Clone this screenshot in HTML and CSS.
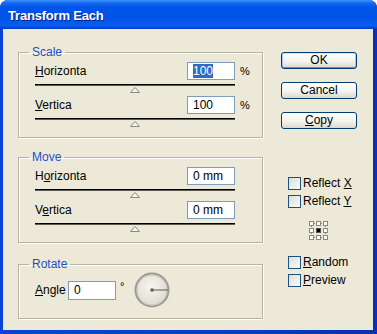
FILE: index.html
```html
<!doctype html>
<html>
    <head>
        <title>Transform Each</title>
        <link rel="stylesheet" href="styles.css">
    </head>
    <body>
        <div class="window">
            <div class="titlebar"><span class="title">Transform Each</span></div>
            <div class="body">
                <div class="groups">
                    <fieldset class="group">
                        <legend>Scale</legend>
                        <div class="fields">
                            <span class="lbl"><u>H</u>orizonta</span>
                            <span class="input"><span class="sel">100</span></span>
                            <span class="unit">%</span>
                            <div class="slider">
                                <div class="track"></div>
                                <svg class="thumb" width="10" height="6" viewBox="0 0 10 6"><polygon points="0.5,5.5 5,0.5 9.5,5.5" fill="#f7f6f1" stroke="#8d8b80" /></svg>
                            </div>
                            <span class="lbl"><u>V</u>ertica</span>
                            <span class="input">100</span>
                            <span class="unit">%</span>
                            <div class="slider">
                                <div class="track"></div>
                                <svg class="thumb" width="10" height="6" viewBox="0 0 10 6"><polygon points="0.5,5.5 5,0.5 9.5,5.5" fill="#f7f6f1" stroke="#8d8b80" /></svg>
                            </div>
                        </div>
                    </fieldset>

                    <fieldset class="group">
                        <legend>Move</legend>
                        <div class="fields">
                            <span class="lbl">H<u>o</u>rizonta</span>
                            <span class="input">0 mm</span>
                            <span class="unit"></span>
                            <div class="slider">
                                <div class="track"></div>
                                <svg class="thumb" width="10" height="6" viewBox="0 0 10 6"><polygon points="0.5,5.5 5,0.5 9.5,5.5" fill="#f7f6f1" stroke="#8d8b80" /></svg>
                            </div>
                            <span class="lbl">V<u>e</u>rtica</span>
                            <span class="input">0 mm</span>
                            <span class="unit"></span>
                            <div class="slider">
                                <div class="track"></div>
                                <svg class="thumb" width="10" height="6" viewBox="0 0 10 6"><polygon points="0.5,5.5 5,0.5 9.5,5.5" fill="#f7f6f1" stroke="#8d8b80" /></svg>
                            </div>
                        </div>
                    </fieldset>

                    <fieldset class="group rotate">
                        <legend>Rotate</legend>
                        <div class="angle-row">
                            <span class="angle-lbl"><u>A</u>ngle</span>
                            <span class="input angle-input">0</span>
                            <span class="deg">°</span>
                            <svg class="dial" width="36" height="36" viewBox="0 0 36 36">
                                <defs>
                                    <radialGradient id="dialfill" cx="0.45" cy="0.4" r="0.6">
                                        <stop offset="0" stop-color="#f6f5f0" />
                                        <stop offset="1" stop-color="#dedbcf" />
                                    </radialGradient>
                                </defs>
                                <circle cx="18" cy="18" r="16.5" fill="url(#dialfill)" stroke="#9c9a92" stroke-width="2" />
                                <circle cx="18" cy="18" r="15" fill="none" stroke="#c9c7bd" stroke-width="1" />
                                <line x1="18" y1="18" x2="34" y2="18" stroke="#5a5a55" stroke-width="1" />
                                <rect x="16.5" y="16.5" width="3" height="3" fill="#5a5a55" />
                            </svg>
                        </div>
                    </fieldset>
                </div>

                <div class="side">
                    <div class="buttons">
                        <button class="btn default">OK</button>
                        <button class="btn">Cancel</button>
                        <button class="btn"><u>C</u>opy</button>
                    </div>
                    <div class="checks reflect">
                        <div class="check"><span class="box"></span><span>Reflect <u>X</u></span></div>
                        <div class="check"><span class="box"></span><span>Reflect <u>Y</u></span></div>
                    </div>
                    <svg class="refpt" width="20" height="20" viewBox="0 0 20 20">
                        <g stroke="#8a887e" stroke-width="1" stroke-dasharray="1 1">
                            <line x1="5" y1="2.5" x2="7" y2="2.5" />
                            <line x1="12" y1="2.5" x2="14" y2="2.5" />
                            <line x1="5" y1="16.5" x2="7" y2="16.5" />
                            <line x1="12" y1="16.5" x2="14" y2="16.5" />
                            <line x1="2.5" y1="5" x2="2.5" y2="7" />
                            <line x1="2.5" y1="12" x2="2.5" y2="14" />
                            <line x1="16.5" y1="5" x2="16.5" y2="7" />
                            <line x1="16.5" y1="12" x2="16.5" y2="14" />
                        </g>
                        <g fill="#fff" stroke="#8a887e" stroke-width="1">
                            <rect x="0.5" y="0.5" width="4" height="4" />
                            <rect x="7.5" y="0.5" width="4" height="4" />
                            <rect x="14.5" y="0.5" width="4" height="4" />
                            <rect x="0.5" y="7.5" width="4" height="4" />
                            <rect x="14.5" y="7.5" width="4" height="4" />
                            <rect x="0.5" y="14.5" width="4" height="4" />
                            <rect x="7.5" y="14.5" width="4" height="4" />
                            <rect x="14.5" y="14.5" width="4" height="4" />
                        </g>
                        <rect x="7.5" y="7.5" width="4" height="4" fill="#000" stroke="#555" />
                    </svg>
                    <div class="checks options">
                        <div class="check"><span class="box"></span><span><u>R</u>andom</span></div>
                        <div class="check"><span class="box"></span><span><u>P</u>review</span></div>
                    </div>
                </div>
            </div>
        </div>
    </body>
</html>
```
FILE: styles.css
```css
* {
    box-sizing: border-box;
}

body {
    margin: 0;
    background: #fff;
    font-family: "Liberation Sans", Arial, sans-serif;
    font-size: 12px;
    color: #000;
}

.window {
    width: 377px;
    height: 334px;
    display: flex;
    flex-direction: column;
    background: linear-gradient(to right, #0842d8, #0a3ccc 50%, #0830b8);
    border-radius: 8px 8px 0 0;
    overflow: hidden;
}

.titlebar {
    height: 29px;
    flex: none;
    display: flex;
    align-items: center;
    padding: 1px 8px 0;
    background: linear-gradient(
        to bottom,
        #3d93fb 0,
        #1768f0 3px,
        #0055ea 7px,
        #0053e6 60%,
        #0a5cee 88%,
        #0049d8 96%,
        #0036c0 100%
    );
}

.title {
    color: #fff;
    font-weight: bold;
    font-size: 13px;
    letter-spacing: -0.2px;
    text-shadow: 1px 1px 0 #0c2080;
}

.body {
    flex: 1;
    margin: 0 4px 4px 3px;
    background: #ece9d8;
    display: grid;
    grid-template-columns: 245px 76px;
    column-gap: 18px;
    align-items: start;
    padding: 16px 0 0 15px;
}

.groups {
    display: flex;
    flex-direction: column;
    gap: 12px;
}

.group {
    margin: 0;
    min-width: 0;
    padding: 0 0 7px 10px;
    border: 1px solid #b6b3a3;
    box-shadow: 1px 1px 0 #fff, inset 1px 1px 0 #fff;

    legend {
        padding: 0 3px;
        line-height: 14px;
        color: #1a4fc8;
    }

    &.rotate {
        margin-top: 2px;
        padding-bottom: 10px;
    }
}

.fields {
    display: grid;
    grid-template-columns: 152px 48px 1fr;
    margin: 3px 0 0 6px;
}

.lbl {
    grid-column: 1;
    line-height: 18px;
}

.input {
    height: 18px;
    border: 1px solid #7f9db9;
    background: #fff;
    padding-left: 5px;
    line-height: 16px;
    white-space: nowrap;
}

.sel {
    display: inline-block;
    background: #316ac5;
    color: #fff;
    line-height: 14px;
}

.unit {
    padding-left: 5px;
    line-height: 18px;
    font-size: 11px;
}

.slider {
    grid-column: 1 / 3;
    margin: 4px 0 3px;
    display: flex;
    flex-direction: column;
    align-items: center;

    .track {
        align-self: stretch;
        height: 2px;
        border-top: 1px solid #000;
        border-bottom: 1px solid #5b5a55;
    }

    .thumb {
        display: block;
        margin-top: 1px;
    }
}

.angle-row {
    display: flex;
    align-items: center;
    margin: 1px 0 0 6px;

    .angle-lbl {
        width: 33px;
    }

    .angle-input {
        width: 48px;
        height: 19px;
        line-height: 17px;
    }

    .deg {
        width: 18px;
        padding-left: 4px;
        align-self: flex-start;
        margin-top: 8px;
        font-size: 11px;
    }
}

.side {
    display: flex;
    flex-direction: column;
    margin-top: 7px;
}

.buttons {
    display: flex;
    flex-direction: column;
    gap: 13px;
}

.btn {
    height: 17px;
    padding: 0;
    font: inherit;
    color: #000;
    line-height: 15px;
    border: 1px solid #003c74;
    border-radius: 3px;
    background: linear-gradient(#ffffff, #f4f3ee 55%, #dcd7cb);

    &.default {
        box-shadow:
            inset 0 1px 0 #cee7ff,
            inset 0 -1px 0 #6982ee,
            inset 1px 0 0 #a9c6f6,
            inset -1px 0 0 #a9c6f6;
    }
}

.checks {
    display: flex;
    flex-direction: column;
    gap: 5px;
    margin-left: 7px;

    &.reflect {
        margin-top: 48px;
    }

    &.options {
        margin-top: 15px;
    }
}

.check {
    display: flex;
    align-items: center;
    gap: 2px;
    height: 13px;
    line-height: 13px;
}

.box {
    width: 13px;
    height: 13px;
    border: 1px solid #1c5180;
    background: linear-gradient(135deg, #dcdcd7, #fbfbf9);
}

.refpt {
    display: block;
    margin: 13px 0 0 28px;
}
```
